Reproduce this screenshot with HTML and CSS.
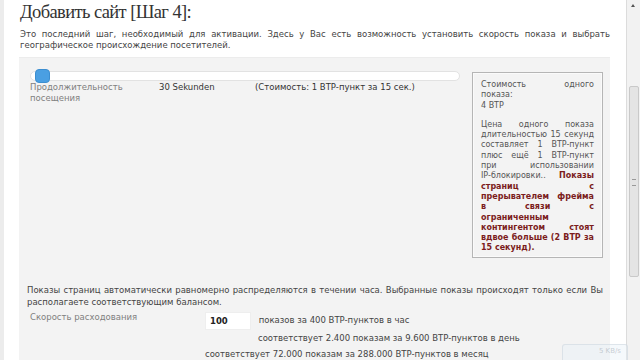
FILE: index.html
```html
<!DOCTYPE html>
<html lang="ru">
<head>
  <meta charset="UTF-8" />
  <title>Добавить сайт [Шаг 4]</title>
  <link rel="stylesheet" href="styles.css">
</head>
<body>
  <div class="page">
    <div class="edge"></div>

    <div class="main">
      <h1>Добавить сайт [Шаг 4]:</h1>
      <p class="intro">Это последний шаг, необходимый для активации. Здесь у Вас есть возможность установить скорость показа и выбрать географическое происхождение посетителей.</p>

      <div class="box">
        <div class="top">
          <div class="duration">
            <div class="slider">
              <span class="handle"></span>
            </div>
            <div class="row">
              <span class="label">Продолжительность посещения</span>
              <span class="value">30 Sekunden</span>
              <span class="cost">(Стоимость: 1 BTP-пункт за 15 сек.)</span>
            </div>
          </div>

          <div class="info">
            <p class="lines">Стоимость одного<br>показа:</p>
            <p class="price">4 BTP</p>
            <p class="lines">Цена одного показа<br>длительностью 15 секунд<br>составляет 1 BTP-пункт<br>плюс ещё 1 BTP-пункт<br>при использовании<br>IP-блокировки.. <b>Показы<br>страниц с<br>прерывателем фрейма<br>в связи с<br>ограниченным<br>контингентом стоят<br>вдвое больше (2 BTP за</b></p>
            <p class="last"><b>15 секунд).</b></p>
          </div>
        </div>

        <p class="note">Показы страниц автоматически равномерно распределяются в течении часа. Выбранные показы происходят только если Вы располагаете соответствующим балансом.</p>

        <div class="speed">
          <span class="label">Скорость расходования</span>
          <div class="speed-values">
            <div class="line first"><span class="input">100</span> показов за 400 BTP-пунктов в час</div>
            <div class="line second">соответствует 2.400 показам за 9.600 BTP-пунктов в день</div>
            <div class="line">соответствует 72.000 показам за 288.000 BTP-пунктов в месяц</div>
          </div>
        </div>
      </div>
    </div>

    <div class="scrollbar">
      <span class="arrow"></span>
      <div class="thumb"><span class="grip"></span></div>
    </div>
  </div>

  <div class="toast">5 KB/s</div>
</body>
</html>
```

FILE: styles.css
```css
body {
  margin: 0;
  background: #fff;
  font-family: "DejaVu Sans", Verdana, sans-serif;
  font-size: 8.5px;
  color: #444;
  overflow: hidden;
}

.page {
  display: flex;
  height: 360px;
}

.edge {
  width: 4px;
  background: #ececec;
}

.main {
  flex: 1;
  padding: 0 16px 0 15px;
}

h1 {
  font-family: "Liberation Serif", "Times New Roman", serif;
  font-weight: normal;
  font-size: 18.5px;
  letter-spacing: -0.6px;
  color: #333;
  margin: 0;
  padding: 0 0 0 1px;
  line-height: 24px;
}

.intro {
  margin: 5px 0 0 1px;
  line-height: 11px;
  text-align: justify;
}

/* grey settings panel */
.box {
  margin-top: 6px;
  background: #f3f3f3;
  border-top: 1px solid #ececec;
  padding: 0 7px 0 8px;
  height: 320px;
}

.top {
  display: flex;
  padding: 10px 0 0 3px;
}

.duration {
  width: 430px;
}

.slider {
  position: relative;
  height: 8px;
  margin-top: 3px;
  background: #fff;
  border: 1px solid #e2e2e2;
  border-radius: 5px;
}

.handle {
  position: absolute;
  left: 4px;
  top: -3px;
  width: 13px;
  height: 12px;
  background: #4a9fe2;
  border: 1px solid #3c8ed0;
  border-radius: 4px;
}

.row {
  display: flex;
  margin-top: 1px;
  line-height: 11px;
}

.row .label {
  width: 129px;
  color: #808080;
}

.row .value {
  width: 96px;
  color: #333;
}

.row .cost {
  color: #333;
}

.info {
  width: 113px;
  margin-left: 12px;
  margin-top: 4px;
  padding: 7px 8px 0 8px;
  border: 1px solid #b5b5b5;
  box-shadow: inset 0 0 0 1px #fafafa;
  color: #555;
  font-size: 8px;
  line-height: 10.3px;
  height: 177px;
  white-space: nowrap;
}

.info p {
  margin: 0;
}

.info .lines {
  text-align: justify;
  text-align-last: justify;
}

.info .price {
  margin-bottom: 9px;
}

.info b {
  color: #7b1c1c;
}

.note {
  margin: 26px 0 0 0;
  line-height: 12px;
  text-align: justify;
  color: #444;
}

.speed {
  display: flex;
  margin-top: 3px;
}

.speed .label {
  width: 175px;
  padding: 1px 0 0 3px;
  color: #808080;
}

.speed-values {
  color: #444;
}

.line {
  line-height: 16px;
}

.line.first {
  line-height: 18px;
}

.line.second {
  padding-left: 53px;
}

.input {
  display: inline-block;
  width: 40px;
  height: 16px;
  line-height: 16px;
  padding-left: 4px;
  margin-right: 5px;
  background: #fff;
  border: 1px solid #eee;
  color: #222;
  font-weight: bold;
  vertical-align: middle;
}

.scrollbar {
  position: relative;
  width: 13px;
  background: #f2f2f2;
  border-left: 1px solid #dcdcdc;
}

.arrow {
  position: absolute;
  top: 4px;
  left: 4px;
  border: 2px solid transparent;
  border-bottom: 3px solid #555;
  border-top: none;
}

.thumb {
  position: absolute;
  top: 86px;
  left: 2px;
  width: 8px;
  height: 189px;
  background: #e4e4e4;
  border: 1px solid #c9c9c9;
  border-radius: 2px;
}

.grip {
  position: absolute;
  top: 92px;
  left: 2px;
  width: 4px;
  height: 5px;
  border-top: 1px solid #999;
  border-bottom: 1px solid #999;
}

.toast {
  position: absolute;
  left: 562px;
  top: 344px;
  width: 66px;
  height: 20px;
  border: 1px solid rgba(200, 210, 220, 0.5);
  border-radius: 3px;
  background: rgba(230, 240, 248, 0.4);
  color: rgba(150, 160, 170, 0.5);
  font-size: 7px;
  text-align: right;
  padding-right: 6px;
  box-sizing: border-box;
  line-height: 12px;
}
```
